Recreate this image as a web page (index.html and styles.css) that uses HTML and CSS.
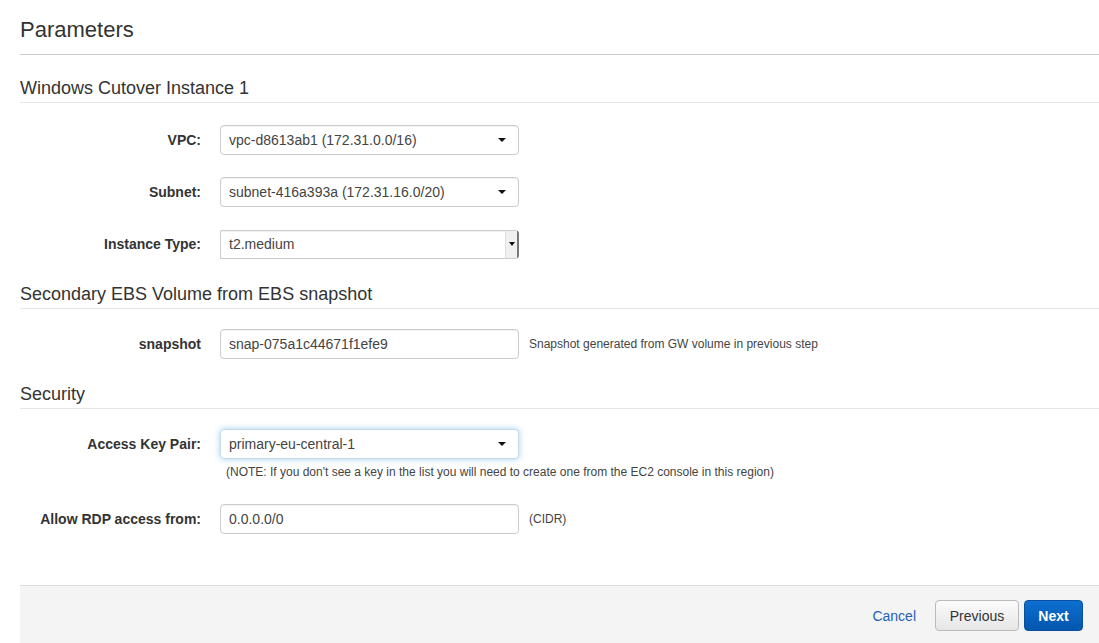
FILE: index.html
```html
<!DOCTYPE html>
<html>
<head>
<meta charset="utf-8">
<link rel="stylesheet" href="styles.css">
</head>
<body>
<div class="page">
  <h1 class="title">Parameters</h1>

  <section class="group first">
    <h2 class="group-title">Windows Cutover Instance 1</h2>
    <div class="row">
      <label class="label">VPC:</label>
      <div class="control select"><span>vpc-d8613ab1 (172.31.0.0/16)</span><i class="caret"></i></div>
    </div>
    <div class="row">
      <label class="label">Subnet:</label>
      <div class="control select"><span>subnet-416a393a (172.31.16.0/20)</span><i class="caret"></i></div>
    </div>
    <div class="row last">
      <label class="label">Instance Type:</label>
      <div class="control native"><span>t2.medium</span><span class="spin"><i class="caret small"></i></span></div>
    </div>
  </section>

  <section class="group">
    <h2 class="group-title">Secondary EBS Volume from EBS snapshot</h2>
    <div class="row last">
      <label class="label">snapshot</label>
      <div class="control input"><span>snap-075a1c44671f1efe9</span></div>
      <span class="help">Snapshot generated from GW volume in previous step</span>
    </div>
  </section>

  <section class="group">
    <h2 class="group-title">Security</h2>
    <div class="row with-note">
      <label class="label">Access Key Pair:</label>
      <div class="control select focus"><span>primary-eu-central-1</span><i class="caret"></i></div>
    </div>
    <div class="note">(NOTE: If you don't see a key in the list you will need to create one from the EC2 console in this region)</div>
    <div class="row rdp last">
      <label class="label">Allow RDP access from:</label>
      <div class="control input"><span>0.0.0.0/0</span></div>
      <span class="help">(CIDR)</span>
    </div>
  </section>

  <footer class="footer">
    <a class="cancel">Cancel</a>
    <button class="btn prev">Previous</button>
    <button class="btn next">Next</button>
  </footer>
</div>
</body>
</html>
```

FILE: styles.css
```css
* { box-sizing: border-box; }
html, body { margin: 0; padding: 0; background: #fff; }
body {
  font-family: "Liberation Sans", Arial, Helvetica, sans-serif;
  color: #333;
  overflow: hidden;
}
.page {
  padding-left: 20px;
  width: 1099px;
  height: 643px;
}
.title {
  margin: 0;
  padding-top: 17px;
  height: 55px;
  font-size: 22px;
  font-weight: normal;
  line-height: 26px;
  color: #333;
  border-bottom: 1px solid #ccc;
}
.group { padding-top: 25px; }
.group.first { padding-top: 23px; }
.group-title {
  margin: 0 0 20px 0;
  font-size: 18px;
  font-weight: normal;
  line-height: 20px;
  padding-bottom: 4px;
  color: #333;
  border-bottom: 1px solid #e6e6e6;
}
.group.first .group-title { margin-bottom: 22px; }
.row {
  display: flex;
  align-items: center;
  height: 30px;
  margin-bottom: 22px;
}
.row.last { margin-bottom: 0; }
.label {
  width: 181px;
  margin-right: 19px;
  text-align: right;
  font-size: 14px;
  font-weight: bold;
  color: #333;
}
.control {
  width: 299px;
  height: 30px;
  border: 1px solid #ccc;
  border-radius: 4px;
  background: #fff;
  display: flex;
  align-items: center;
  padding: 0 8px;
  font-size: 14px;
  color: #444;
  position: relative;
  box-shadow: inset 0 1px 1px rgba(0,0,0,0.06);
}
.control > span:first-child { flex: 1; }
.select .caret, .native .caret {
  width: 0; height: 0;
  border-left: 4px solid transparent;
  border-right: 4px solid transparent;
  border-top: 4px solid #111;
  margin-right: 4px;
}
.native {
  height: 29px;
  border-radius: 2px 4px 4px 2px;
  padding-right: 0;
  border-right: 2px solid #777;
}
.native .spin {
  width: 12px;
  height: 27px;
  background: #f0f0f0;
  border-left: 1px solid #e0e0e0;
  display: flex;
  align-items: center;
  justify-content: center;
}
.native .caret.small {
  border-left-width: 3px;
  border-right-width: 3px;
  border-top-width: 4px;
  margin: 0;
}
.input { height: 30px; }
.help {
  margin-left: 10px;
  font-size: 12px;
  color: #444;
}
.focus {
  border-color: #c9d9e9;
  box-shadow: 0 0 6px rgba(102,175,233,0.6);
}
.row.with-note { margin-bottom: 6px; }
.note {
  margin-left: 206px;
  font-size: 12px;
  color: #444;
  line-height: 14px;
}
.row.rdp { margin-top: 25px; }
.footer {
  margin-top: 51px;
  height: 58px;
  background: #f4f4f4;
  border-top: 1px solid #ddd;
  display: flex;
  justify-content: flex-end;
  align-items: center;
  padding-right: 16px;
  padding-top: 2px;
}
.cancel {
  color: #1f60b5;
  font-size: 14px;
  margin-right: 19px;
  cursor: pointer;
}
.btn {
  font-family: "Liberation Sans", Arial, sans-serif;
  font-size: 14px;
  height: 31px;
  border-radius: 4px;
  padding: 0 12px;
}
.prev {
  width: 84px;
  background: linear-gradient(#fbfbfb, #e6e6e6);
  border: 1px solid #bbb;
  color: #333;
  margin-right: 5px;
}
.next {
  width: 59px;
  background: linear-gradient(#0d6fd0, #0356ad);
  border: 1px solid #0a50a0;
  color: #fff;
  font-weight: bold;
}
```
